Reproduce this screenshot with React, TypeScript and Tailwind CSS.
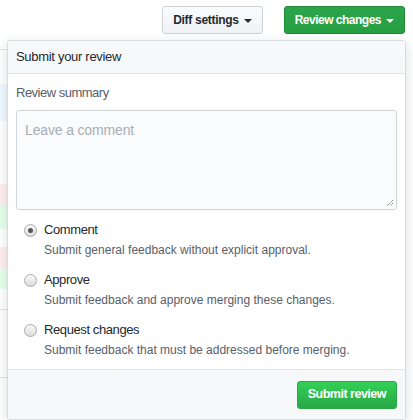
import React from "react"

const font = { fontFamily: '"Liberation Sans", Arial, sans-serif' }

function Caret({ className }: { className: string }) {
  return <span className={"inline-block ml-[5px] border-x-[4px] border-x-transparent border-t-[4px] align-middle " + className} />
}

function Radio({ checked }: { checked?: boolean }) {
  return (
    <span className="mt-[3px] flex h-[13px] w-[13px] shrink-0 items-center justify-center rounded-full border border-[#a9a9a9] bg-gradient-to-b from-[#fbfbfb] to-[#dcdcdc]">
      {checked && <span className="h-[5px] w-[5px] rounded-full bg-[#555]" />}
    </span>
  )
}

const options = [
  { label: "Comment", desc: "Submit general feedback without explicit approval.", checked: true },
  { label: "Approve", desc: "Submit feedback and approve merging these changes." },
  { label: "Request changes", desc: "Submit feedback that must be addressed before merging." },
]

export default function App() {
  return (
    <div className="relative h-[420px] w-[413px] overflow-hidden bg-white" style={font}>
      <div className="flex justify-end gap-[21px] pr-[8px] pt-[6px]">
        <button className="h-[28px] rounded-[3px] border border-[#cfd3d7] bg-gradient-to-b from-[#fafbfc] to-[#eff3f6] px-[10px] text-[12px] font-bold tracking-[-0.3px] text-[#24292e]">
          Diff settings<Caret className="border-t-[#24292e]" />
        </button>
        <button className="h-[28px] rounded-[3px] border border-[#218838] bg-gradient-to-b from-[#2ba44b] to-[#269f42] px-[10px] text-[12px] font-bold tracking-[-0.5px] text-white">
          Review changes<Caret className="border-t-white" />
        </button>
      </div>

      {/* diff lines peeking out behind the dropdown */}
      <div className="mt-[15px] w-[7px]">
        <div className="h-px bg-[#e1e4e8]" />
        <div className="h-[34px]" />
        <div className="h-[37px] bg-[#f1f8ff]" />
        <div className="h-[63px]" />
        <div className="h-[22px] bg-[#ffeef0]" />
        <div className="h-[23px] bg-[#e6ffed]" />
        <div className="h-[18px]" />
        <div className="h-[22px] bg-[#ffeef0]" />
        <div className="h-[20px] bg-[#e6ffed]" />
        <div className="h-[20px]" />
        <div className="h-px bg-[#e1e4e8]" />
        <div className="h-[67px]" />
        <div className="h-px bg-[#e1e4e8]" />
      </div>

      <div className="absolute left-[7px] top-[40px] w-[399px] rounded-[3px] border border-[#d9dcdf] bg-white shadow-[0_3px_12px_rgba(27,31,35,0.15)]">
        <div className="flex h-[33px] items-center border-b border-[#e1e4e8] bg-[#f6f8fa] px-[8px] text-[13px] tracking-[-0.3px] text-[#24292e]">
          Submit your review
        </div>
        <div className="px-[8px] pt-[10px]">
          <div className="text-[13px] leading-[18px] tracking-[-0.5px] text-[#586069]">Review summary</div>
          <div className="relative mt-[8px] h-[100px] rounded-[3px] border border-[#d1d5da] bg-[#fafbfc] px-[8px] pt-[9px] text-[14px] tracking-[-0.15px] text-[#a9aeb4]">
            Leave a comment
            <svg className="absolute bottom-[2px] right-[2px]" width="8" height="8" viewBox="0 0 8 8">
              <path d="M7 1L1 7M7 4L4 7" stroke="#555" strokeWidth="1" strokeDasharray="1 1" />
            </svg>
          </div>
          <div className="flex flex-col gap-[12px] pb-[10px] pl-[8px] pt-[11px]">
            {options.map((o) => (
              <div key={o.label} className="flex gap-[7px]">
                <Radio checked={o.checked} />
                <div>
                  <div className="text-[13px] leading-[18px] tracking-[-0.4px] text-[#24292e]">{o.label}</div>
                  <div className="mt-[2px] text-[12px] leading-[18px] text-[#586069]">{o.desc}</div>
                </div>
              </div>
            ))}
          </div>
        </div>
        <div className="flex h-[50px] items-center justify-end border-t border-[#e1e4e8] bg-[#f6f8fa] pr-[8px]">
          <button className="h-[28px] rounded-[3px] border border-[#28a745] bg-gradient-to-b from-[#34d058] to-[#28a745] px-[10px] text-[12.5px] font-bold tracking-[-0.5px] text-white">
            Submit review
          </button>
        </div>
      </div>
    </div>
  )
}
